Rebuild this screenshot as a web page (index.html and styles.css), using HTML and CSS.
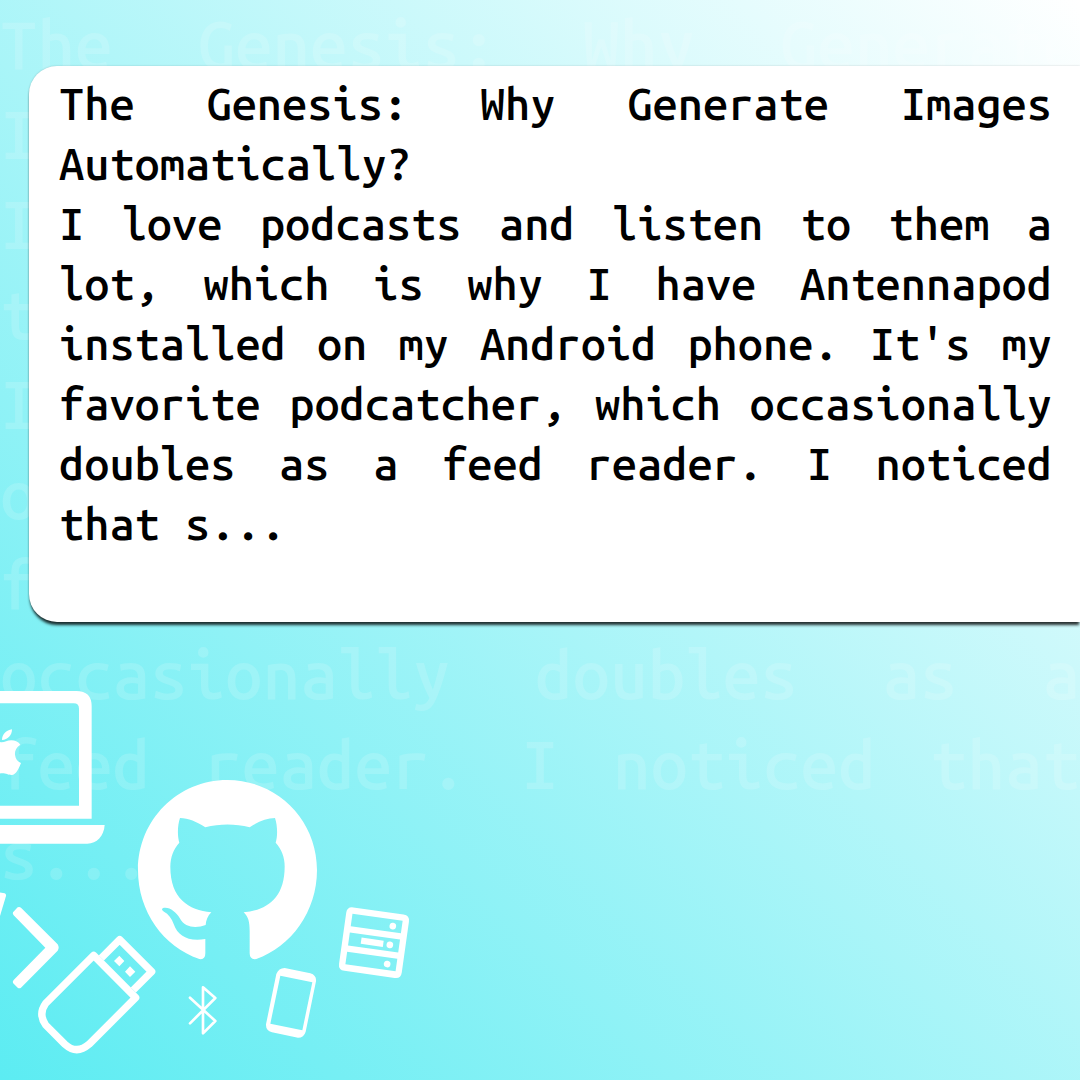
FILE: index.html
```html
<!DOCTYPE html>
<html lang="en">
<head>
<meta charset="utf-8">
<meta name="viewport" content="width=device-width, initial-scale=1">
<title>The Genesis: Why Generate Images Automatically?</title>
<link rel="stylesheet" href="styles.css">
</head>
<body>
<div class="page">
  <div class="backdrop" aria-hidden="true">
    <p>The Genesis: Why Generate Images Automatically?</p>
    <p>I love podcasts and listen to them a lot, which is why I have Antennapod installed on my Android phone. It's my favorite podcatcher, which occasionally doubles as a feed reader. I noticed that s...</p>
  </div>

  <svg class="gadgets" viewBox="0 680 420 400" fill="#fff" aria-hidden="true">
    <!-- laptop -->
    <g transform="translate(0 670) scale(.33333)">
      <path fill-rule="evenodd" d="M-20 63H229Q275 63 275 109V446H-20ZM-20 100H221Q237 100 237 116V407H-20Z"/>
      <path d="M-20 465H314C312 498 290 521 262 521H-20Z"/>
      <path d="M6 210C6 193 19 180 36 178C36 196 23 210 6 210Z"/>
      <path d="M-20 212C-8 210 -3 217 5 217C14 217 22 211 34 211C46 211 56 216 61 224C48 232 44 243 45 254C46 266 53 275 63 279C58 293 48 315 35 315C23 315 20 310 6 310C-5 310 -10 315 -20 315Z"/>
    </g>
    <!-- octocat -->
    <path transform="translate(130 770) scale(.33333)" d="M226 550Q226 570 208 567C100 530 24 425 24 300C24 150 143 30 292 30C442 30 561 150 561 300C561 425 483 530 379 567Q359 570 359 550V485C359 455 355 440 341 427C410 420 464 385 464 290C464 262 455 238 437 218C443 200 443 168 435 144C410 144 385 154 359 172C315 161 270 161 226 172C200 155 175 144 150 144C142 168 142 198 148 218C130 238 121 262 121 290C121 385 175 420 244 427C233 437 228 452 227 465C200 475 165 475 149 444C140 428 122 413 106 413C94 413 93 419 102 425C115 432 125 445 132 464C142 495 175 517 226 507Z"/>
    <!-- code bracket, usb stick, bluetooth -->
    <g transform="translate(0 870) scale(.33333)">
      <path d="M-10 66L14 70Q19 72 18 78L0 138H-10Z"/>
      <path d="M39 127L53 112Q58 109 63 113L173 223Q179 233 173 242L63 353Q58 357 53 353L39 339Q37 334 41 330L136 233L41 136Q37 132 39 127Z"/>
      <g fill="none" stroke="#fff" stroke-width="22" stroke-linejoin="round">
        <path d="M281 256L137 400Q114 432 137 465L195 523Q230 555 267 523L407 383Z"/>
        <path d="M304 264L359 209L455 305L400 360"/>
      </g>
      <path d="M358 257L373 273L358 289L342 273ZM390 289L406 305L390 321L375 305Z"/>
      <path fill="none" stroke="#fff" stroke-width="8" stroke-linejoin="round" stroke-linecap="round" d="M570 383L646 453L609 490V352L646 384L570 460"/>
    </g>
    <!-- phone and server -->
    <g transform="translate(180 890) scale(.33333)">
      <path fill-rule="evenodd" d="M314 234L391 250Q410 256 408 274L377 425Q372 443 354 443L276 427Q257 421 258 403L289 252Q296 234 314 234ZM301 257L397 277L367 421L271 401Z"/>
      <g transform="translate(582 158) rotate(8)">
        <path fill-rule="evenodd" d="M-76 -96H76Q95 -96 95 -77V77Q95 96 76 96H-76Q-95 96 -95 77V-77Q-95 -96 -76 -96ZM-76 -77V-39H76V-77ZM-76 -20V19H76V-20ZM-76 38V76H76V38Z"/>
        <circle cx="49" cy="-57" r="10"/>
        <circle cx="48" cy="0" r="10"/>
        <circle cx="48" cy="58" r="10"/>
        <path d="M-39 -10H28V9H-39Z"/>
      </g>
    </g>
  </svg>

  <main class="card">
    <h1>The Genesis: Why Generate Images Automatically?</h1>
    <p>I love podcasts and listen to them a lot, which is why I have Antennapod installed on my Android phone. It's my favorite podcatcher, which occasionally doubles as a feed reader. I noticed that s...</p>
  </main>
</div>
</body>
</html>
```

FILE: styles.css
```css
* {
  box-sizing: border-box;
}

body,
h1,
p {
  margin: 0;
}

body {
  font-family: "Ubuntu Sans Mono", "DejaVu Sans Mono", monospace;
  font-weight: 500;
  text-align: justify;
}

.page {
  position: relative;
  min-height: 100vh;
  padding: 66px 0 66px 29px;
  overflow: hidden;
  background: linear-gradient(45deg, #5cecf2, #fff);
}

/* Oversized copy of the excerpt, faint behind everything */
.backdrop {
  position: absolute;
  inset: 1px 0 auto;
  color: rgba(255, 255, 255, 0.15);
  font-size: 67px;
  line-height: 90px;
}

.gadgets {
  position: absolute;
  left: 0;
  bottom: 0;
  width: 420px;
  height: 400px;
}

.card {
  position: relative;
  padding: 9px 28px 67px 30px;
  border-radius: 28px 0 0 28px;
  background: #fff;
  box-shadow: 0 4px 3px -1px rgba(0, 0, 0, 0.8), 0 0 2px rgba(0, 0, 0, 0.2);
  color: #000;
  font-size: 45px;
  line-height: 60px;
}

.card h1 {
  font-size: inherit;
  font-weight: inherit;
}
```
